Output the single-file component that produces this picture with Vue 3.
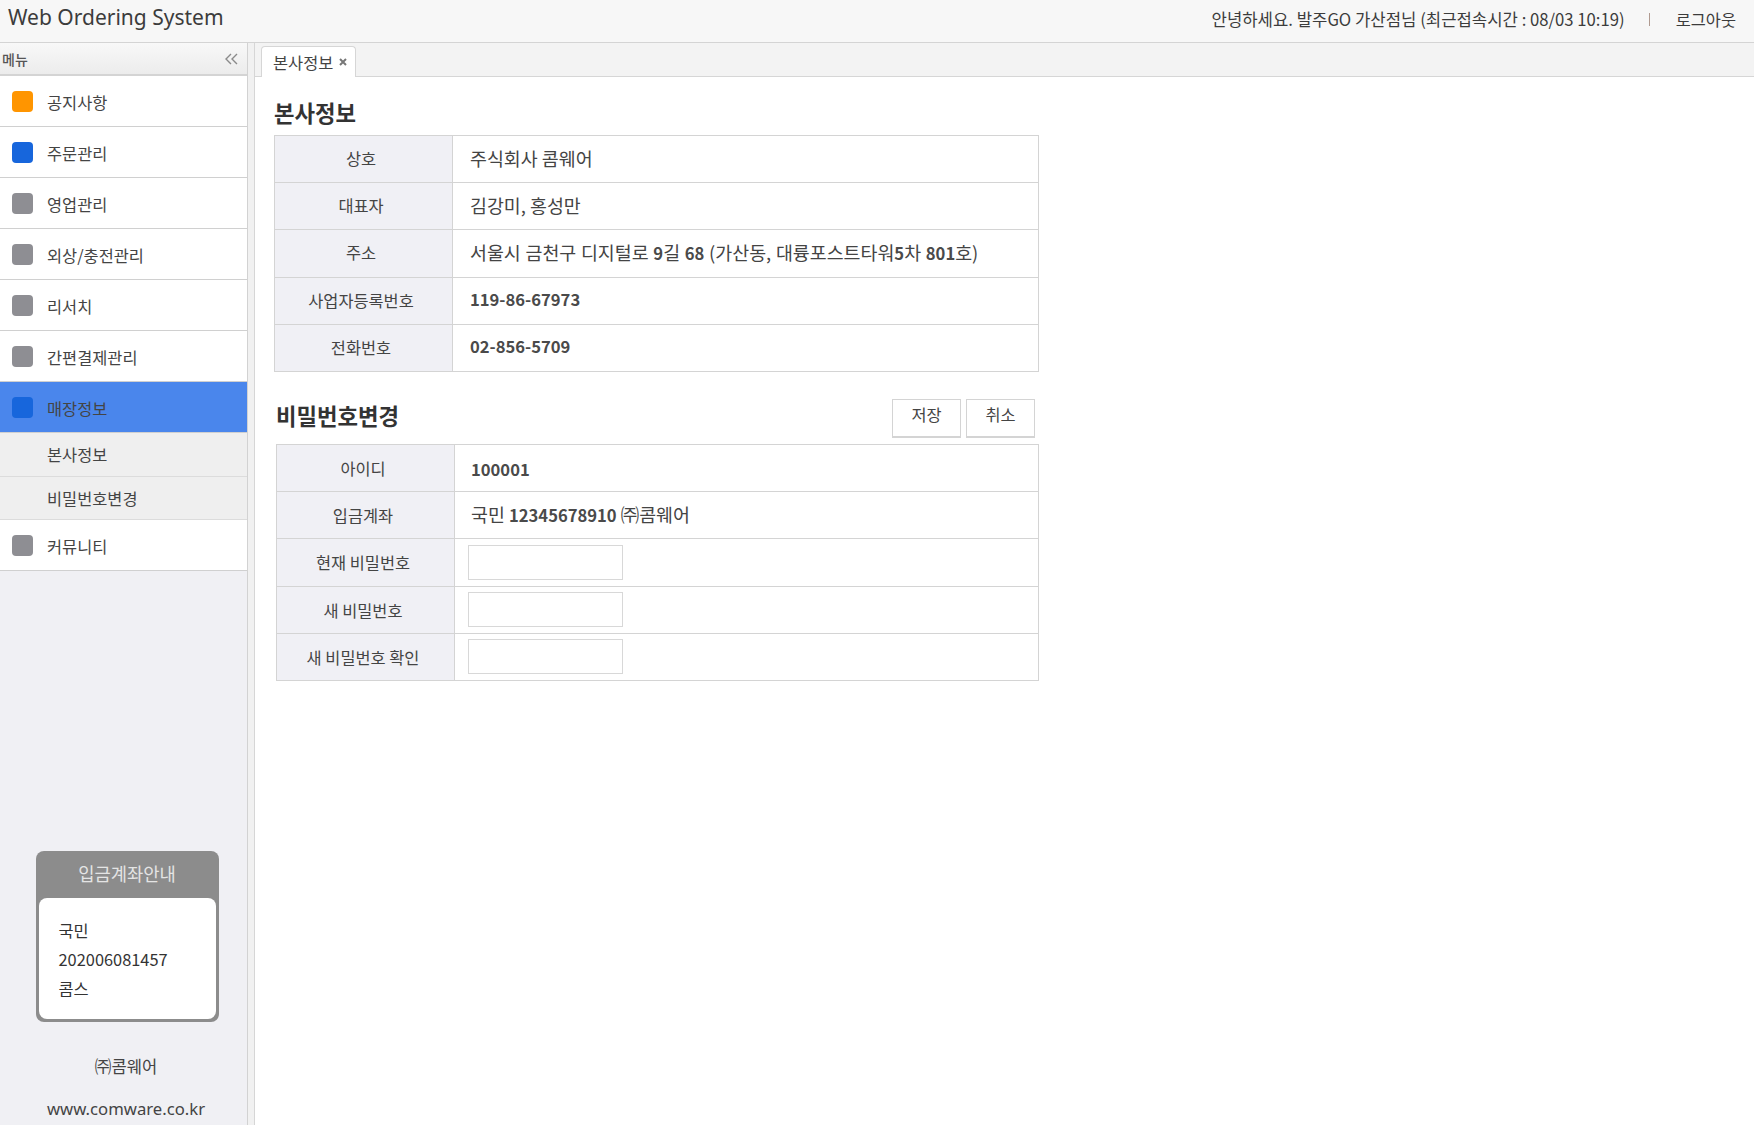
<script setup>
const menus = [
  { name: '공지사항', color: 'orange' },
  { name: '주문관리', color: 'blue' },
  { name: '영업관리', color: 'gray' },
  { name: '외상/충전관리', color: 'gray' },
  { name: '리서치', color: 'gray' },
  { name: '간편결제관리', color: 'gray' },
  { name: '매장정보', color: 'blue', active: true, subs: ['본사정보', '비밀번호변경'] },
  { name: '커뮤니티', color: 'gray' },
]
const address = [
  ['서울시 금천구 디지털로 ', false], ['9', true], ['길 ', false], ['68', true],
  [' (가산동, 대륭포스트타워', false], ['5', true], ['차 ', false], ['801', true], ['호)', false],
]
const passwords = ['현재 비밀번호', '새 비밀번호', '새 비밀번호 확인']
</script>

<template>
  <div class="page">
    <header class="top">
      <div class="brand">Web Ordering System</div>
      <div class="user">
        <span class="hello">안녕하세요. 발주GO 가산점님 (최근접속시간 : 08/03 10:19)</span>
        <i class="sep"></i>
        <span>로그아웃</span>
      </div>
    </header>
    <div class="body">
      <aside class="side">
        <div class="side-head">
          <span>메뉴</span>
          <svg width="13" height="12" viewBox="0 0 13 12" fill="none" stroke="#8a8a8a" stroke-width="1.4">
            <path d="M6 1 1 6l5 5M12 1 7 6l5 5" />
          </svg>
        </div>
        <nav class="menu">
          <template v-for="m in menus" :key="m.name">
            <div class="item" :class="{ active: m.active }">
              <i class="dot" :class="m.color"></i>
              <span>{{ m.name }}</span>
            </div>
            <div v-for="s in m.subs" :key="s" class="sub">{{ s }}</div>
          </template>
        </nav>
        <div class="side-foot">
          <div class="account">
            <div class="account-title">입금계좌안내</div>
            <div class="account-body">
              <div>국민</div>
              <div>202006081457</div>
              <div>콤스</div>
            </div>
          </div>
          <div class="corp">㈜콤웨어</div>
          <div class="url">www.comware.co.kr</div>
        </div>
      </aside>
      <div class="split"></div>
      <main class="main">
        <div class="tabs">
          <div class="tab">
            본사정보
            <svg width="8" height="8" viewBox="0 0 8 8" stroke="#777" stroke-width="2" fill="none">
              <path d="M1 1l6 6M7 1 1 7" />
            </svg>
          </div>
        </div>
        <div class="content">
          <section class="sec-one">
            <h2>본사정보</h2>
            <table>
              <tbody>
                <tr>
                  <th>상호</th>
                  <td>주식회사 콤웨어</td>
                </tr>
                <tr>
                  <th>대표자</th>
                  <td>김강미, 홍성만</td>
                </tr>
                <tr>
                  <th>주소</th>
                  <td class="addr"><span v-for="(a, i) in address" :key="i" :class="{ num: a[1] }">{{ a[0] }}</span></td>
                </tr>
                <tr>
                  <th>사업자등록번호</th>
                  <td class="up"><span class="num">119-86-67973</span></td>
                </tr>
                <tr>
                  <th>전화번호</th>
                  <td class="up"><span class="num">02-856-5709</span></td>
                </tr>
              </tbody>
            </table>
          </section>
          <section class="sec-two">
            <div class="sec-head">
              <h2>비밀번호변경</h2>
              <div class="btns">
                <button type="button">저장</button>
                <button type="button">취소</button>
              </div>
            </div>
            <table>
              <tbody>
                <tr>
                  <th>아이디</th>
                  <td class="id"><span class="num">100001</span></td>
                </tr>
                <tr>
                  <th>입금계좌</th>
                  <td>국민 <span class="num">12345678910</span> ㈜콤웨어</td>
                </tr>
                <tr v-for="p in passwords" :key="p">
                  <th>{{ p }}</th>
                  <td class="field"><input type="password" /></td>
                </tr>
              </tbody>
            </table>
          </section>
        </div>
      </main>
    </div>
  </div>
</template>

<style>
html, body { margin: 0; background: #fff; overflow: hidden; }
</style>

<style scoped>
* { box-sizing: border-box; }
.page {
  width: 1754px; height: 1125px; display: flex; flex-direction: column; overflow: hidden;
  font-family: "Noto Sans CJK KR", "Noto Sans", sans-serif; color: #444; font-size: 15px;
}
.top {
  height: 43px; flex: none; display: flex; justify-content: space-between; align-items: center;
  padding: 0 18px 0 8px; background: #f7f7f7; border-bottom: 1px solid #d4d4d4;
}
.brand { font-family: "Noto Sans", sans-serif; font-size: 21px; color: #3c3c3c; margin-top: -9px; }
.user { display: flex; align-items: center; font-size: 16.4px; color: #3c3c3c; margin-top: -4px; }
.hello { font-size: 16.7px; }
.sep { width: 1px; height: 13px; background: #b09a90; margin: 0 26px 0 24px; }
.body { flex: 1; display: flex; min-height: 0; }
.side {
  width: 248px; flex: none; display: flex; flex-direction: column; background: #f0f0f4;
  border-right: 1px solid #d2d2d2;
}
.side-head {
  height: 33px; flex: none; display: flex; align-items: center; justify-content: space-between;
  padding: 0 9px 0 2px; font-size: 14px; font-weight: 500; color: #555;
  background: linear-gradient(#f8f8f8, #ececec); border-bottom: 2px solid #d4d4d4;
}
.menu { display: flex; flex-direction: column; }
.item {
  height: 51px; display: flex; align-items: center; gap: 14px; padding: 1px 0 0 12px;
  background: #fff; border-bottom: 1px solid #d0d0d0; color: #444; font-size: 16.4px;
}
.item.active { background: #4a86ec; }
.dot { width: 21px; height: 21px; border-radius: 4px; flex: none; }
.dot.orange { background: #ff9500; }
.dot.blue { background: #1766dc; }
.dot.gray { background: #8e8e93; }
.sub {
  height: 43.5px; display: flex; align-items: center; padding-left: 47px; background: #efefef;
  border-bottom: 1px solid #dcdcdc; font-size: 16.4px;
}
.side-foot { margin-top: auto; display: flex; flex-direction: column; align-items: center; padding: 0 0 4px 5px; }
.account {
  width: 183px; background: #8c8c8c; border-radius: 8px; padding: 0 3px 3px; margin: 0 0 32px 2px;
}
.account-title {
  height: 47px; display: flex; align-items: center; justify-content: center; padding-bottom: 3px;
  color: #e4e4e4; font-size: 17.7px;
}
.account-body {
  height: 121px; background: #fff; border-radius: 8px; padding: 18px 20px;
  line-height: 29.2px; color: #333; font-size: 16.4px;
}
.corp { font-size: 16.6px; color: #444; line-height: 24px; margin-bottom: 19px; }
.url { font-family: "Noto Sans", sans-serif; font-size: 16.7px; color: #444; line-height: 24px; }
.split { width: 7px; flex: none; background: #f1f1f1; border-right: 1px solid #d6d6d6; }
.main { flex: 1; min-width: 0; background: #fff; }
.tabs {
  height: 34px; background: #f3f3f3; border-bottom: 1px solid #d6d6d6; display: flex;
  align-items: flex-end; padding-left: 6px;
}
.tab {
  width: 95px; height: 31px; margin-bottom: -1px; background: #fff; border: 1px solid #d6d6d6;
  border-bottom: 0; border-radius: 4px 4px 0 0; font-size: 16.4px; color: #444;
  display: flex; align-items: center; gap: 6px; padding: 0 0 1px 11px; white-space: nowrap;
}
.content { padding: 20px 0 0 19px; width: 800px; }
h2 { margin: 0; font-size: 22.3px; font-weight: 700; color: #333; line-height: 30px; }
.sec-one h2 { margin-bottom: 8px; }
.sec-two { margin: 26px 0 0 2px; width: 763px; }
.sec-head { display: flex; justify-content: space-between; align-items: flex-start; height: 46px; }
.sec-head h2 { margin-top: 2px; }
.btns { display: flex; gap: 5px; padding: 1px 4px 0 0; }
button {
  width: 69px; height: 39px; background: #fff; border: 1px solid #d4d4d4; border-bottom-width: 2px;
  font: inherit; font-size: 16.4px; color: #444; padding: 0 0 7px; border-radius: 0;
}
table { width: 100%; border-collapse: collapse; table-layout: fixed; }
th, td { height: 47.2px; border: 1px solid #d4d4d4; padding: 0; }
th {
  width: 178px; padding: 0 5px 2px 0; background: #f0f0f5; font-weight: 400; font-size: 16.4px;
  color: #444; text-align: center;
}
.sec-one table { width: 765px; }
.sec-two th { padding-bottom: 0; }
td { padding: 0 0 2px 17px; font-size: 18.4px; color: #444; text-align: left; }
td.up { padding-bottom: 5px; }
td.addr { word-spacing: 0.6px; }
.sec-two td { padding-left: 16px; }
.sec-two td.id { padding-bottom: 0; }
.num { font-size: 16.6px; font-weight: 700; color: #4a4a4a; }
.sec-two td.field { padding: 0 0 0 13px; }
input {
  display: block; width: 155px; height: 35px; border: 1px solid #d8d8d8; background: #fff;
  padding: 0; outline: none; border-radius: 0;
}
</style>
